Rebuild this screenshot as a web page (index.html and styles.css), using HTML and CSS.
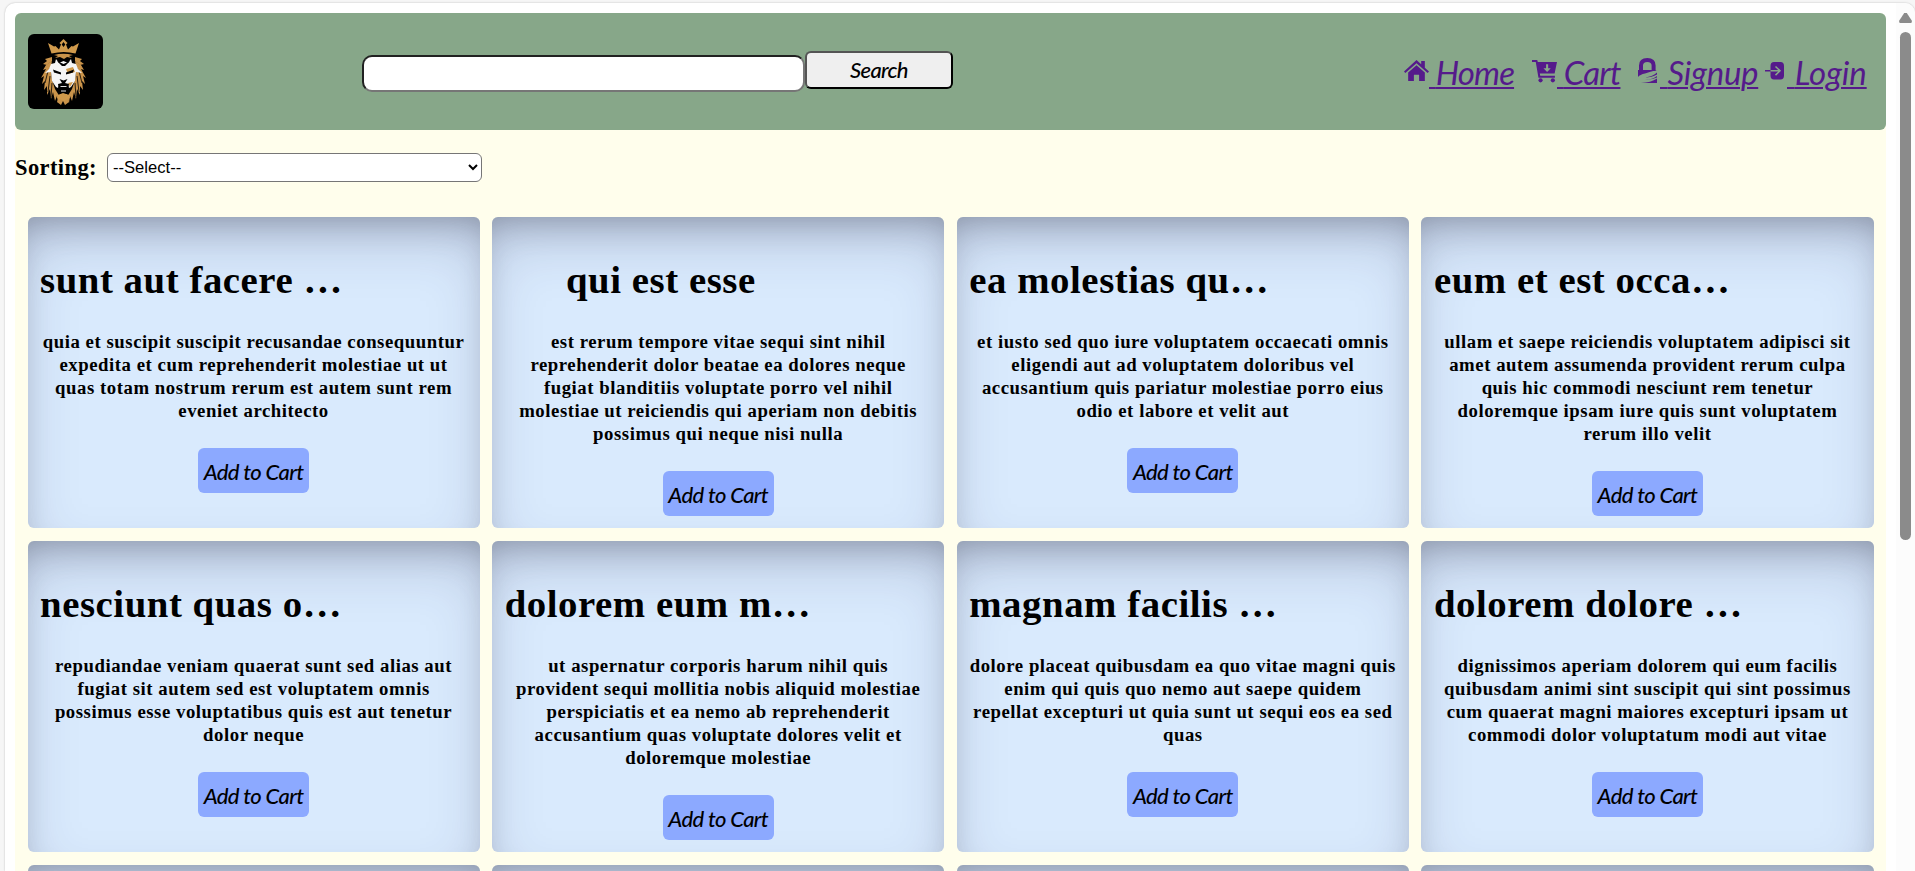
FILE: index.html
```
<!DOCTYPE html>
<html lang="en">
<head>
<meta charset="utf-8">
<title>Shop</title>
<link rel="stylesheet" href="styles.css">
</head>
<body>
<div class="window">
  <main class="page">
    <header class="header">
      <svg class="logo" viewBox="0 0 75 75">
        <rect width="75" height="75" fill="#000"/>
        <path fill="#d09a4c" fill-rule="evenodd" d="M20 9l6 3.500 1.500-.5 3.500 3.500 2-5-1.500-1.500L35.500 5l4 4-1.500 1.500 2 5 3.500-3.500 1.500.5 6-3.500-3.500 10.500q-11.500-3-24 0zM35.500 8l-1.800 2.500 1.800 2.500 1.800-2.500z"/>
        <path fill="#c9934a" d="M26 21q9-2.500 19 0l-4 1 3 2-5-1-3 2-4-2-5 1 3-2z"/>
        <path fill="#c9934a" d="M24 23l-7 2 2 2-4 3 4 1 5-4zM47 23l7 2-2 2 4 3-4 1-5-4zM32 60l-3 8 4 3 2-4 2 4 4-3-2-8z"/>
        <path id="mane" fill="#c9934a" d="M24 27l-6 4-3 5 3-1-5 9 3-2-2 8 3-3-1 9 3-4v9l3-6 1 10 2-7 2 9 2-5 1 7 2-6-5-8-3-9-1-9-4 2 4-7z"/>
        <path fill="#c9934a" d="M47 27l6 4 3 5-3-1 5 9-3-2 2 8-3-3 1 9-3-4v9l-3-6-1 10-2-7-2 9-2-5-1 7-2-6 5-8 3-9 1-9 4 2-4-7z"/>
        <path fill="none" stroke="#000" stroke-width=".8" d="M20 37l-3 12M22 42l-2 16M24 49l-1 14M51 37l3 12M49 42l2 16M47 49l1 14"/>
        <path fill="#f5f5f5" d="M28 25l3 4 4.500-2 4.500 2 3-4 1 4 4 1 2 5 4 4-6-1-1 9-4 6-2 1-1-4h-9l-1 4-2-1-4-6-1-9-6 1 4-4 2-5 4-1z"/>
        <path fill="#d09a4c" d="M38 35l7-2 2 5-7 2zM30 61l5-2 6 2 1 3-6 3-7-3zM40 49l5-1-3 5z"/>
        <path fill="#000" d="M25 35.500l8 3v2l-7-2zM46 35.500l-8 3v2l7-2zM31.500 45l4 1.500 4-1.500-2.500 4 4 1-2 9h-7l-2-9 4-1zM29 27l6.500 3 6.500-3-5 5h-3z"/>
        <path fill="#ddd" d="M32.500 52h6v1h-6zM33 56.500h5v1h-5z"/>
      </svg>
      <form class="search">
        <input class="search-input" type="text">
        <button class="search-button" type="button">Search</button>
      </form>
      <nav class="nav">
        <a class="nav-link home" href="#"><svg class="icon" viewBox="0 0 24 24"><path d="M0 12L12 1l4.500 4V2H20v6.500L24 12l-1.300 1.500L12 4 1.300 13.500zM12 6l8 7v8h-5.500v-6h-5v6H4v-8z"/></svg><span class="label">Home</span></a>
        <a class="nav-link cart" href="#"><svg class="icon" viewBox="0 0 24 24"><path d="M0 0h5l.6 2H24l-2.300 11H7.500l.4 2H22v2H6.200L3.600 2H0z"/><circle cx="8.200" cy="19.500" r="2"/><circle cx="20" cy="19.500" r="2"/><path class="icon-cut" d="M13.500 4h2v4H18l-3.500 3.500L11 8h2.500z"/></svg><span class="label">Cart</span></a>
        <a class="nav-link signup" href="#"><svg class="icon" viewBox="0 0 19 25"><path class="icon-line" d="M3 13V7.500Q3 2 9.300 2t6.300 5.500V13"/><path d="M0 12h19q-7 1.500-12 3.500-5 1-7 3.500zM19 14.500v2q-5 3-12 3 8-1 12-5zM19 18v1.500q-5 2.500-12 2 8 0 12-3.500zM19 20.500V25H3q10-.5 16-4.500z"/></svg><span class="label">Signup</span></a>
        <a class="nav-link login" href="#"><svg class="icon" viewBox="0 0 19 18"><path d="M9 0h6.500Q19 0 19 4v9.500q0 4-3.500 4H9q-3.500 0-3.500-4V9.600H0V8h5.500V4Q5.500 0 9 0z"/><path class="icon-arrow" d="M5.500 8.800h9M10.500 4.500l4.500 4.300-4.500 4.300"/></svg><span class="label">Login</span></a>
      </nav>
    </header>
    <div class="sorting">
      <label class="sort-label" for="sort">Sorting:</label>
      <select class="sort-select" id="sort"><option>--Select--</option></select>
    </div>
    <section class="grid">
      <article class="card"><h1 class="title">sunt aut facere …</h1><p class="text">quia et suscipit suscipit recusandae consequuntur expedita et cum reprehenderit molestiae ut ut quas totam nostrum rerum est autem sunt rem eveniet architecto</p><button class="add">Add to Cart</button></article>
      <article class="card"><h1 class="title short">qui est esse</h1><p class="text">est rerum tempore vitae sequi sint nihil reprehenderit dolor beatae ea dolores neque fugiat blanditiis voluptate porro vel nihil molestiae ut reiciendis qui aperiam non debitis possimus qui neque nisi nulla</p><button class="add">Add to Cart</button></article>
      <article class="card"><h1 class="title">ea molestias qu…</h1><p class="text">et iusto sed quo iure voluptatem occaecati omnis eligendi aut ad voluptatem doloribus vel accusantium quis pariatur molestiae porro eius odio et labore et velit aut</p><button class="add">Add to Cart</button></article>
      <article class="card"><h1 class="title">eum et est occa…</h1><p class="text">ullam et saepe reiciendis voluptatem adipisci sit amet autem assumenda provident rerum culpa quis hic commodi nesciunt rem tenetur doloremque ipsam iure quis sunt voluptatem rerum illo velit</p><button class="add">Add to Cart</button></article>
      <article class="card"><h1 class="title">nesciunt quas o…</h1><p class="text">repudiandae veniam quaerat sunt sed alias aut fugiat sit autem sed est voluptatem omnis possimus esse voluptatibus quis est aut tenetur dolor neque</p><button class="add">Add to Cart</button></article>
      <article class="card"><h1 class="title">dolorem eum m…</h1><p class="text">ut aspernatur corporis harum nihil quis<br>provident sequi mollitia nobis aliquid molestiae<br>perspiciatis et ea nemo ab reprehenderit<br>accusantium quas voluptate dolores velit et<br>doloremque molestiae</p><button class="add">Add to Cart</button></article>
      <article class="card"><h1 class="title">magnam facilis …</h1><p class="text">dolore placeat quibusdam ea quo vitae magni quis<br>enim qui quis quo nemo aut saepe quidem<br>repellat excepturi ut quia sunt ut sequi eos ea sed<br>quas</p><button class="add">Add to Cart</button></article>
      <article class="card"><h1 class="title">dolorem dolore …</h1><p class="text">dignissimos aperiam dolorem qui eum facilis quibusdam animi sint suscipit qui sint possimus cum quaerat magni maiores excepturi ipsam ut commodi dolor voluptatum modi aut vitae</p><button class="add">Add to Cart</button></article>
      <article class="card"></article><article class="card"></article><article class="card"></article><article class="card"></article>
    </section>
  </main>
  <div class="scrollbar"><div class="arrow"></div><div class="thumb"></div></div>
</div>
</body>
</html>
```
FILE: styles.css
```
* { box-sizing: border-box; }
body { margin: 0; height: 871px; overflow: hidden; background: #f6f6f6; padding: 3px 0 0 5px; font-family: "Liberation Serif", serif; color: #000; }
.window { display: flex; height: 868px; background: #fff; border-radius: 10px 10px 0 0; box-shadow: 0 0 2px rgba(0,0,0,.25); overflow: hidden; }
.page { width: 1871px; flex: none; margin: 10px 10px 0; background: #fffeec; border-radius: 6px 6px 0 0; }
.header { height: 117px; background: #87a789; border-radius: 6px; display: flex; align-items: flex-start; padding: 0 18px 0 13px; }
.logo { width: 75px; height: 75px; margin-top: 21px; border-radius: 6px; flex: none; }
.search { display: flex; margin: 38px 0 0 259px; align-items: flex-start; }
.search-input { width: 443px; height: 37px; margin-top: 4px; border: 2px inset #767676; border-radius: 10px; background: #fff; }
.search-button { width: 148px; height: 38px; padding: 0 0 1px; border: 2px outset #000; border-radius: 6px; background: #efefef; font: italic 500 22px Lato, sans-serif; letter-spacing: -.7px; }
.nav { display: flex; margin-left: auto; margin-top: 40px; font: italic 33px/38px Lato, sans-serif; }
.nav-link { display: flex; color: #551a8b; text-decoration: none; }
.icon { fill: #551a8b; flex: none; }
.icon-cut { fill: #87a789; }
.icon-line { fill: none; stroke: #551a8b; stroke-width: 4; }
.icon-arrow { fill: none; stroke: #87a789; stroke-width: 1.500; }
.label { white-space: pre; text-decoration: underline; text-decoration-thickness: 2px; text-underline-offset: 2px; letter-spacing: -.9px; }
.label::before { content: " "; }
.home .icon { width: 25px; height: 25px; margin-top: 6px; }
.cart .icon { width: 25px; height: 25px; margin-top: 7px; }
.signup .icon { width: 19px; height: 25px; margin: 5px 3px 0; }
.login .icon { width: 19px; height: 18px; margin: 9px 3px 0 1px; }
.home { width: 128px; }
.cart { width: 103px; }
.signup { width: 129px; }
.login { width: 104px; }
.signup .label { letter-spacing: -.3px; }
.login .label { letter-spacing: -.1px; }
.sorting { height: 74px; display: flex; align-items: center; }
.sort-label { font-size: 22.500px; font-weight: 700; letter-spacing: .4px; width: 92px; padding-top: 2px; }
.sort-select { width: 375px; height: 29px; border: 1px solid #767676; border-radius: 6px; background: #fff; font: 16.600px "Liberation Sans", sans-serif; padding: 0 1px; color: #000; }
.grid { display: grid; grid-template-columns: repeat(4, 1fr); grid-auto-rows: 311px; gap: 13px 12.500px; padding: 13px 12.500px 0; }
.card { border-radius: 6px; background: #d9eafd; box-shadow: inset 0 30px 60px -12px rgba(50,50,93,.25), inset 0 18px 36px -18px rgba(0,0,0,.3); padding: 12.500px; display: flow-root; text-align: center; }
.title { width: 312.500px; margin: 27px 0 27.500px; font-size: 38.800px; line-height: 46px; letter-spacing: .55px; white-space: nowrap; text-align: left; }
.short { text-align: center; }
.text { margin: 0 0 26px; font-size: 18.750px; line-height: 23px; font-weight: 700; letter-spacing: .54px; }
.add { border: 0; border-radius: 6px; width: 111px; height: 45px; padding: 1px 0 0; background: #8ca9ff; font: italic 500 22px Lato, sans-serif; letter-spacing: -.6px; white-space: nowrap; }
.scrollbar { width: 19px; flex: none; background: #fcfcfc; padding: 10px 3px 0; }
.arrow { width: 13px; height: 10px; background: #8b8b8b; clip-path: polygon(40% 0, 60% 0, 100% 80%, 95% 100%, 5% 100%, 0 80%); }
.thumb { margin: 9px 1px 0; height: 508px; border-radius: 6px; background: #8b8b8b; }
```
